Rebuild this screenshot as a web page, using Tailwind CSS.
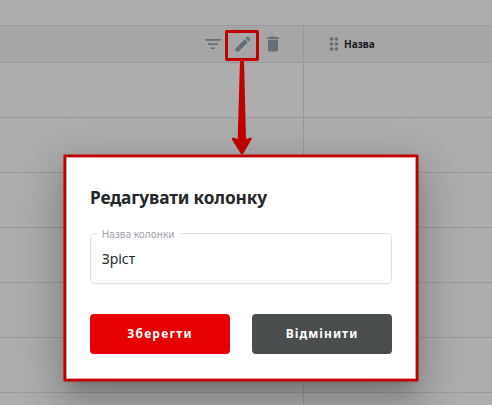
<!DOCTYPE html>
<html lang="uk">
<head>
<meta charset="utf-8">
<title>Редагувати колонку</title>
<script src="https://cdn.jsdelivr.net/npm/@tailwindcss/browser@4"></script>
</head>
<body class="relative h-[405px] w-[492px] overflow-hidden bg-[#adadad] font-['Noto_Sans',sans-serif]">
<div class="flex h-full flex-col overflow-hidden">
  <div class="h-[25px] shrink-0"></div>
  <div class="flex h-[38px] shrink-0 border-y border-[#999999] bg-[#a6a6a6]">
    <div class="flex w-[304px] items-center justify-end gap-[12px] border-r border-[#999999] pr-[24px] text-[#676d76]">
      <svg class="h-[18px] w-[18px]" viewBox="0 0 18 18" fill="currentColor"><path d="M1.300 4h15.400v1.700H1.300zM4 8.200h10v1.700H4zM7 12.400h4v1.700H7z"/></svg>
      <svg class="h-[20px] w-[20px] -mx-[1px]" viewBox="0 0 24 24" fill="currentColor"><path d="M3 17.25V21h3.75L17.81 9.94l-3.75-3.75L3 17.25zM20.71 7.04a1 1 0 0 0 0-1.41l-2.34-2.34a1 1 0 0 0-1.41 0l-1.83 1.83 3.75 3.75 1.83-1.83z"/></svg>
      <svg class="h-[20px] w-[20px] -mr-1 -ml-[1px]" viewBox="0 0 24 24" fill="currentColor"><path d="M6 19c0 1.100.9 2 2 2h8c1.100 0 2-.9 2-2V7H6v12zM19 4h-3.500l-1-1h-5l-1 1H5v2h14V4z"/></svg>
    </div>
    <div class="flex flex-1 items-center pl-[25px]">
      <svg class="h-[16px] w-[10px]" viewBox="0 0 10 16" fill="#676d76"><circle cx="2.500" cy="3" r="1.800"/><circle cx="7.500" cy="3" r="1.800"/><circle cx="2.500" cy="8" r="1.800"/><circle cx="7.500" cy="8" r="1.800"/><circle cx="2.500" cy="13" r="1.800"/><circle cx="7.500" cy="13" r="1.800"/></svg>
      <span class="ml-[5px] origin-left scale-x-[.95] text-[10.500px] leading-none font-bold text-[#171a20]">Назва</span>
    </div>
  </div>
  <div class="grid min-h-0 flex-1 auto-rows-[55px] grid-cols-[304px_1fr] overflow-hidden">
    <div class="border-r border-b border-[#999999]"></div><div class="border-b border-[#999999]"></div>
    <div class="border-r border-b border-[#999999]"></div><div class="border-b border-[#999999]"></div>
    <div class="border-r border-b border-[#999999]"></div><div class="border-b border-[#999999]"></div>
    <div class="border-r border-b border-[#999999]"></div><div class="border-b border-[#999999]"></div>
    <div class="border-r border-b border-[#999999]"></div><div class="border-b border-[#999999]"></div>
    <div class="border-r border-b border-[#999999]"></div><div class="border-b border-[#999999]"></div>
    <div class="h-[12px] border-r border-[#999999]"></div><div class="h-[12px]"></div>
  </div>
</div>
<section class="absolute top-[155px] left-[64px] flex h-[226px] w-[354px] flex-col rounded-[1px] border-[2px] border-[#bf0000] bg-white px-[24px] pt-[30px] shadow-[0_0_0_1px_rgba(191,0,0,0.55),inset_0_0_0_1px_rgba(191,0,0,0.4),0_11px_15px_-7px_rgba(0,0,0,0.2),0_24px_38px_3px_rgba(0,0,0,0.14),0_9px_46px_8px_rgba(0,0,0,0.12)]">
  <h1 class="h-[46px] origin-left scale-x-[.96] text-[18px] leading-[20px] font-bold tracking-[-0.150px] whitespace-nowrap text-[#25282b]">Редагувати колонку</h1>
  <fieldset class="relative h-[51px] w-[302px] shrink-0 rounded-[5px] border border-[#dedede]">
    <label class="absolute -top-[7px] left-[6px] origin-left scale-x-[.96] bg-white px-[5px] text-[10.500px] leading-[14px] text-[#9ca1aa]">Назва колонки</label>
    <div class="w-fit origin-left scale-x-[.93] pt-[14px] pl-[11.500px] text-[15px] leading-[20px] text-[#25282b]">Зріст</div>
  </fieldset>
  <div class="mt-[30px] flex gap-[22px] text-[12px] font-bold text-white">
    <button class="h-[40px] w-[140px] rounded-[4px] bg-[#e60000] tracking-[1.200px]">Зберегти</button>
    <button class="h-[40px] w-[140px] rounded-[4px] bg-[#4a4d4e] tracking-[1.050px]">Відмінити</button>
  </div>
</section>
<div class="absolute top-[30px] left-[225px] h-[31px] w-[34px] rounded-[2px] border-[3px] border-[#bf0000]"></div>
<svg class="absolute top-[60px] left-[220px] h-[100px] w-[50px]" viewBox="0 0 50 100" fill="#bf0000"><path d="M20 0h4l2 79 5-1.500q1.500.500.500 2L23 94h-2l-9-14.500q-.500-1.500 1-2l4.700 1.500z"/></svg>
</body>
</html>
